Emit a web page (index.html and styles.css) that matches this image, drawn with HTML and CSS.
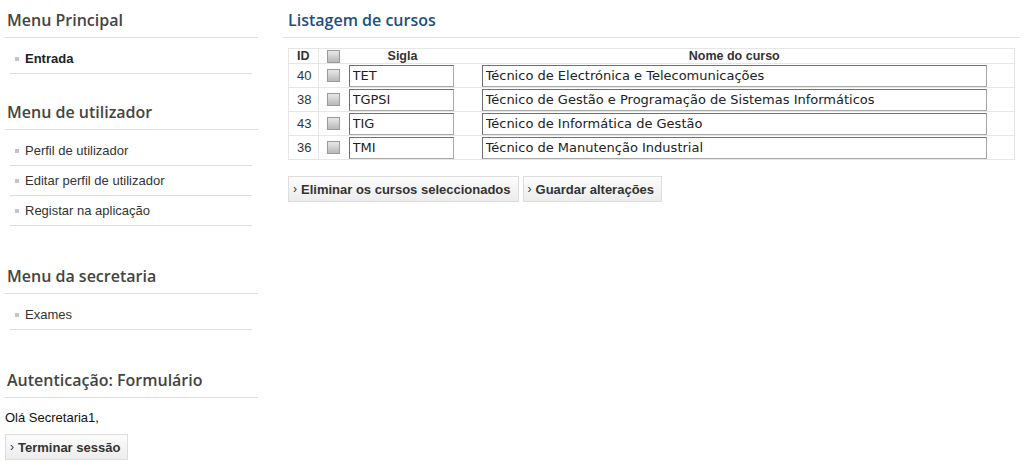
FILE: index.html
```html
<!DOCTYPE html>
<html lang="pt">
<head>
<meta charset="utf-8">
<title>Listagem de cursos</title>
<link rel="stylesheet" href="styles.css">
</head>
<body>
<div class="page">
  <aside class="sidebar">
    <section class="block block-first">
      <h2 class="block-title">Menu Principal</h2>
      <ul class="menu">
        <li class="menu-item"><span class="bullet"></span><a class="menu-link active" href="#">Entrada</a></li>
      </ul>
    </section>
    <section class="block">
      <h2 class="block-title">Menu de utilizador</h2>
      <ul class="menu">
        <li class="menu-item"><span class="bullet"></span><a class="menu-link" href="#">Perfil de utilizador</a></li>
        <li class="menu-item"><span class="bullet"></span><a class="menu-link" href="#">Editar perfil de utilizador</a></li>
        <li class="menu-item"><span class="bullet"></span><a class="menu-link" href="#">Registar na aplicação</a></li>
      </ul>
    </section>
    <section class="block">
      <h2 class="block-title">Menu da secretaria</h2>
      <ul class="menu">
        <li class="menu-item"><span class="bullet"></span><a class="menu-link" href="#">Exames</a></li>
      </ul>
    </section>
    <section class="block block-last">
      <h2 class="block-title">Autenticação: Formulário</h2>
      <p class="greeting">Olá Secretaria1,</p>
      <button class="btn" type="button"><span class="chev">›</span>Terminar sessão</button>
    </section>
  </aside>
  <main class="main">
    <h1 class="page-title">Listagem de cursos</h1>
    <table class="courses">
      <colgroup>
        <col class="c-id"><col class="c-chk"><col class="c-sigla"><col class="c-nome">
      </colgroup>
      <thead>
        <tr><th class="th-id">ID</th><th class="th-chk"><input class="chk" type="checkbox"></th><th>Sigla</th><th class="th-nome">Nome do curso</th></tr>
      </thead>
      <tbody>
        <tr><td class="td-id">40</td><td class="td-chk"><input class="chk" type="checkbox"></td><td><input class="field sigla" type="text" value="TET"></td><td><input class="field nome" type="text" value="Técnico de Electrónica e Telecomunicações"></td></tr>
        <tr><td class="td-id">38</td><td class="td-chk"><input class="chk" type="checkbox"></td><td><input class="field sigla" type="text" value="TGPSI"></td><td><input class="field nome" type="text" value="Técnico de Gestão e Programação de Sistemas Informáticos"></td></tr>
        <tr><td class="td-id">43</td><td class="td-chk"><input class="chk" type="checkbox"></td><td><input class="field sigla" type="text" value="TIG"></td><td><input class="field nome" type="text" value="Técnico de Informática de Gestão"></td></tr>
        <tr><td class="td-id">36</td><td class="td-chk"><input class="chk" type="checkbox"></td><td><input class="field sigla" type="text" value="TMI"></td><td><input class="field nome" type="text" value="Técnico de Manutenção Industrial"></td></tr>
      </tbody>
    </table>
    <div class="actions">
      <button class="btn" type="button"><span class="chev">›</span>Eliminar os cursos seleccionados</button>
      <button class="btn" type="button"><span class="chev">›</span>Guardar alterações</button>
    </div>
  </main>
</div>
</body>
</html>
```

FILE: styles.css
```css
* { box-sizing: border-box; }
html, body { margin: 0; padding: 0; background: #fff; }
body {
  font-family: "Liberation Sans", Arial, sans-serif;
  font-size: 13px;
  color: #333;
}
.page {
  display: flex;
  gap: 25px;
  padding: 0 11px 0 5px;
}
.sidebar { width: 253px; flex: none; }
.main { flex: 1; min-width: 0; }

.block { margin-bottom: 30px; }
.block-first { margin-bottom: 18px; }
.block-last { margin-bottom: 0; }
.block-title {
  margin: 0;
  padding: 10px 0 7px 2px;
  font-family: "Open Sans", "Noto Sans", sans-serif;
  font-weight: 600;
  font-size: 16px;
  line-height: 20px;
  color: #444;
  border-bottom: 1px solid #ddd;
}
.menu {
  list-style: none;
  margin: 0;
  padding: 6px 6px 0 5px;
}
.menu-item {
  display: flex;
  align-items: center;
  height: 30px;
  padding-left: 5px;
  border-bottom: 1px solid #ddd;
}
.bullet {
  width: 4px;
  height: 4px;
  background: #c4c4c4;
  margin-right: 6px;
  flex: none;
}
.menu-link { color: #333; text-decoration: none; }
.menu-link.active { font-weight: bold; color: #222; }

.greeting { margin: 12px 0 0 0; color: #111; line-height: 15px; }

.btn {
  display: inline-flex;
  align-items: center;
  height: 26px;
  padding: 0 7px 0 4px;
  font-family: "Liberation Sans", Arial, sans-serif;
  font-size: 13px;
  font-weight: bold;
  color: #333;
  background: linear-gradient(#fcfcfc, #ececec);
  border: 1px solid #ddd;
  border-radius: 0;
  cursor: pointer;
}
.sidebar .btn { margin-top: 9px; }
.chev { font-weight: normal; font-size: 12px; margin-right: 4px; color: #333; }

.page-title {
  margin: 0;
  padding: 10px 0 7px 5px;
  font-family: "Open Sans", "Noto Sans", sans-serif;
  font-weight: 600;
  font-size: 16px;
  line-height: 20px;
  color: #1e4f7d;
  border-bottom: 1px solid #e2e2e2;
}

.courses {
  width: 727px;
  margin: 10px 0 0 5px;
  border-collapse: collapse;
  table-layout: fixed;
  border: 1px solid #e6e6e6;
}
.c-id { width: 30px; }
.c-chk { width: 28px; }
.c-sigla { width: 112px; }
.courses th {
  height: 15px;
  padding: 0;
  font-size: 12.5px;
  font-weight: bold;
  color: #333;
  text-align: center;
  line-height: 14px;
  border-bottom: 1px solid #e6e6e6;
}
.courses .th-nome { padding-right: 4px; }
.courses td {
  height: 24px;
  padding: 0;
  text-align: left;
  border-bottom: 1px solid #e6e6e6;
}
.courses .th-id, .courses .td-id {
  text-align: left;
  padding-left: 8px;
  border-right: 1px solid #e6e6e6;
  color: #333;
}

.chk {
  -webkit-appearance: none;
  appearance: none;
  display: block;
  width: 13px;
  height: 13px;
  margin: 0 0 0 8px;
  border: 1px solid #9a9a9a;
  background: linear-gradient(#e8e8e8, #b8b8b8);
}

.field {
  display: block;
  height: 22px;
  padding: 0 3px;
  font-family: "DejaVu Sans", sans-serif;
  font-size: 13px;
  color: #222;
  background: #fff;
  border: 1px solid #a8a8a8;
  border-top-color: #707070;
  border-left-color: #707070;
  border-radius: 0;
  outline: none;
}
.field.sigla { width: 105px; margin-left: 2px; }
.field.nome { width: 505px; margin-left: 23px; }

.actions {
  display: flex;
  gap: 4px;
  margin: 16px 0 0 5px;
}
```
